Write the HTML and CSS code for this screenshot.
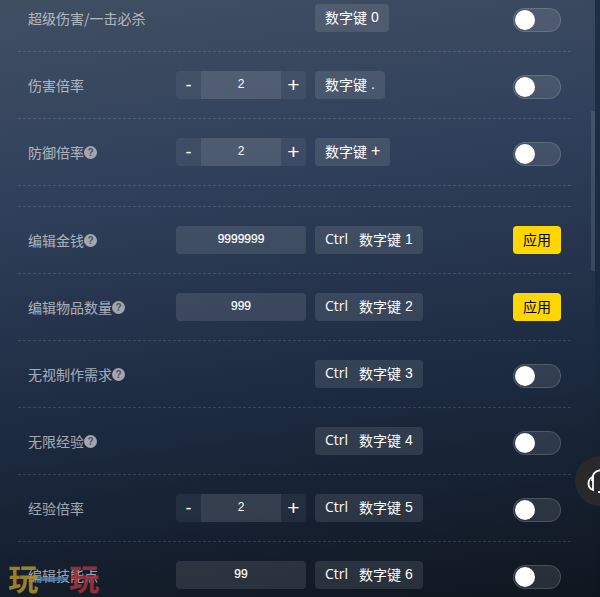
FILE: index.html
```html
<!DOCTYPE html>
<html lang="zh-CN">
<head>
<meta charset="utf-8">
<title>修改器</title>
<link rel="stylesheet" href="styles.css">
</head>
<body>
<main class="panel">
  <div class="list">
    <section class="group">
      <div class="row">
        <div class="label">超级伤害/一击必杀</div>
        <div class="control"></div>
        <div class="key"><span>数字键</span><span class="k-end">0</span></div>
        <div class="toggle"><i></i></div>
      </div>
      <div class="row">
        <div class="label">伤害倍率</div>
        <div class="control stepper"><button class="step">-</button><span class="val">2</span><button class="step plus">+</button></div>
        <div class="key"><span>数字键</span><span class="k-end">.</span></div>
        <div class="toggle"><i></i></div>
      </div>
      <div class="row">
        <div class="label">防御倍率<b class="help">?</b></div>
        <div class="control stepper"><button class="step">-</button><span class="val">2</span><button class="step plus">+</button></div>
        <div class="key"><span>数字键</span><span class="k-end k-plus">+</span></div>
        <div class="toggle"><i></i></div>
      </div>
    </section>
    <section class="group second">
      <div class="row">
        <div class="label">编辑金钱<b class="help">?</b></div>
        <div class="control field">9999999</div>
        <div class="key"><span class="k-ctrl">Ctrl</span><span>数字键</span><span class="k-end">1</span></div>
        <button class="apply">应用</button>
      </div>
      <div class="row">
        <div class="label">编辑物品数量<b class="help">?</b></div>
        <div class="control field">999</div>
        <div class="key"><span class="k-ctrl">Ctrl</span><span>数字键</span><span class="k-end">2</span></div>
        <button class="apply">应用</button>
      </div>
      <div class="row">
        <div class="label">无视制作需求<b class="help">?</b></div>
        <div class="control"></div>
        <div class="key"><span class="k-ctrl">Ctrl</span><span>数字键</span><span class="k-end">3</span></div>
        <div class="toggle"><i></i></div>
      </div>
      <div class="row">
        <div class="label">无限经验<b class="help">?</b></div>
        <div class="control"></div>
        <div class="key"><span class="k-ctrl">Ctrl</span><span>数字键</span><span class="k-end">4</span></div>
        <div class="toggle"><i></i></div>
      </div>
      <div class="row">
        <div class="label">经验倍率</div>
        <div class="control stepper"><button class="step">-</button><span class="val">2</span><button class="step plus">+</button></div>
        <div class="key"><span class="k-ctrl">Ctrl</span><span>数字键</span><span class="k-end">5</span></div>
        <div class="toggle"><i></i></div>
      </div>
      <div class="row">
        <div class="label">编辑技能点</div>
        <div class="control field">99</div>
        <div class="key"><span class="k-ctrl">Ctrl</span><span>数字键</span><span class="k-end">6</span></div>
        <div class="toggle"><i></i></div>
      </div>
    </section>
  </div>
  <div class="thumb"></div>
</main>
<div class="float-btn">
  <svg class="headset" width="30" height="34" viewBox="0 0 30 34" fill="none" stroke="#fff" stroke-width="1.8">
    <path d="M7 15 C7 7 11 4 18 4 C24 4 28 8 28 15"/>
    <path d="M8 11 C2 13 2 22 8 24 Z"/>
    <path d="M13 26 L22 26"/>
  </svg>
</div>
<div class="watermark"><span class="w1">玩</span><span class="w2">一</span><span class="w3">玩</span></div>
</body>
</html>
```
FILE: styles.css
```css
* { box-sizing: border-box; }
html, body { margin: 0; height: 597px; overflow: hidden; }
body {
  position: relative;
  width: 600px;
  background: linear-gradient(180deg, #1e2f43 0%, #1a2a3e 60%, #0e151f 100%);
  font-family: "Noto Sans CJK SC", "Liberation Sans", sans-serif;
  font-size: 14px;
  color: #fff;
}
.panel {
  position: relative;
  width: 595px;
  height: 597px;
  overflow: hidden;
  background: linear-gradient(172deg, #414f63 0%, #30405a 30%, #1c2a40 65%, #0f161f 100%);
}
.list { margin-top: -15px; padding: 0 24px 0 18px; }
.group.second { margin-top: 20px; border-top: 1px dashed rgba(255,255,255,.13); }
.row {
  display: flex;
  align-items: center;
  height: 67px;
  padding: 0 10px;
  border-bottom: 1px dashed rgba(255,255,255,.13);
}
.label {
  display: flex;
  align-items: center;
  width: 148px;
  flex: none;
  line-height: 20px;
  color: rgba(255,255,255,.62);
}
.help {
  width: 13px;
  height: 13px;
  border-radius: 50%;
  background: #a3a6ae;
  color: #4a5260;
  font: bold 10px/13px "Liberation Sans", sans-serif;
  text-align: center;
}
.control {
  display: flex;
  flex: none;
  width: 130px;
  height: 28px;
  margin-right: 9px;
}
.stepper {
  border-radius: 4px;
  overflow: hidden;
  background: rgba(255,255,255,.06);
}
.step {
  width: 25px;
  height: 28px;
  padding: 0;
  border: 0;
  background: none;
  color: #fff;
  font: 18px/26px "Liberation Sans", sans-serif;
}
.step.plus { font-size: 21px; }
.val {
  width: 80px;
  background: rgba(255,255,255,.08);
  text-align: center;
  font: 12px/26px "Liberation Sans", sans-serif;
}
.field {
  justify-content: center;
  border-radius: 4px;
  background: rgba(255,255,255,.1);
  font: 12px/26px "Liberation Sans", sans-serif;
  -webkit-text-stroke: .2px #fff;
}
.key {
  display: flex;
  align-items: flex-start;
  flex: none;
  height: 28px;
  padding: 0 10px;
  border-radius: 4px;
  background: rgba(255,255,255,.1);
  line-height: 26px;
}
.k-ctrl { margin-right: 11px; font-family: "Open Sans", sans-serif; }
.k-end { margin-left: 4px; font-family: "Liberation Sans", sans-serif; }
.k-plus { font-size: 16px; }
.toggle {
  position: relative;
  flex: none;
  width: 48px;
  height: 24px;
  margin: 4px 0 0 auto;
  border: 1px solid rgba(255,255,255,.15);
  border-radius: 12px;
  background: rgba(255,255,255,.1);
}
.toggle i {
  position: absolute;
  left: 1px;
  top: 1px;
  width: 20px;
  height: 20px;
  border-radius: 50%;
  background: #fff;
}
.apply {
  flex: none;
  width: 48px;
  height: 28px;
  margin-left: auto;
  padding: 0 0 2px;
  border: 0;
  border-radius: 4px;
  background: #ffd700;
  color: #000;
  font: 14px/24px "Noto Sans CJK SC", sans-serif;
}
.thumb {
  position: absolute;
  right: 0;
  top: 111px;
  width: 4px;
  height: 160px;
  background: rgba(255,255,255,.1);
}
.float-btn {
  position: absolute;
  left: 575px;
  top: 456px;
  width: 50px;
  height: 50px;
  border-radius: 50%;
  background: #29282b;
}
.headset { position: absolute; left: 10px; top: 10px; }
.watermark {
  position: absolute;
  left: 8px;
  top: 559px;
  display: flex;
  font: 700 30px/36px "Noto Sans CJK SC", sans-serif;
}
.watermark span { width: 30.5px; text-align: center; }
.w1 { color: rgba(176,142,40,.9); }
.w2 { color: rgba(70,130,190,.75); }
.w3 { color: rgba(165,50,56,.9); }
```
